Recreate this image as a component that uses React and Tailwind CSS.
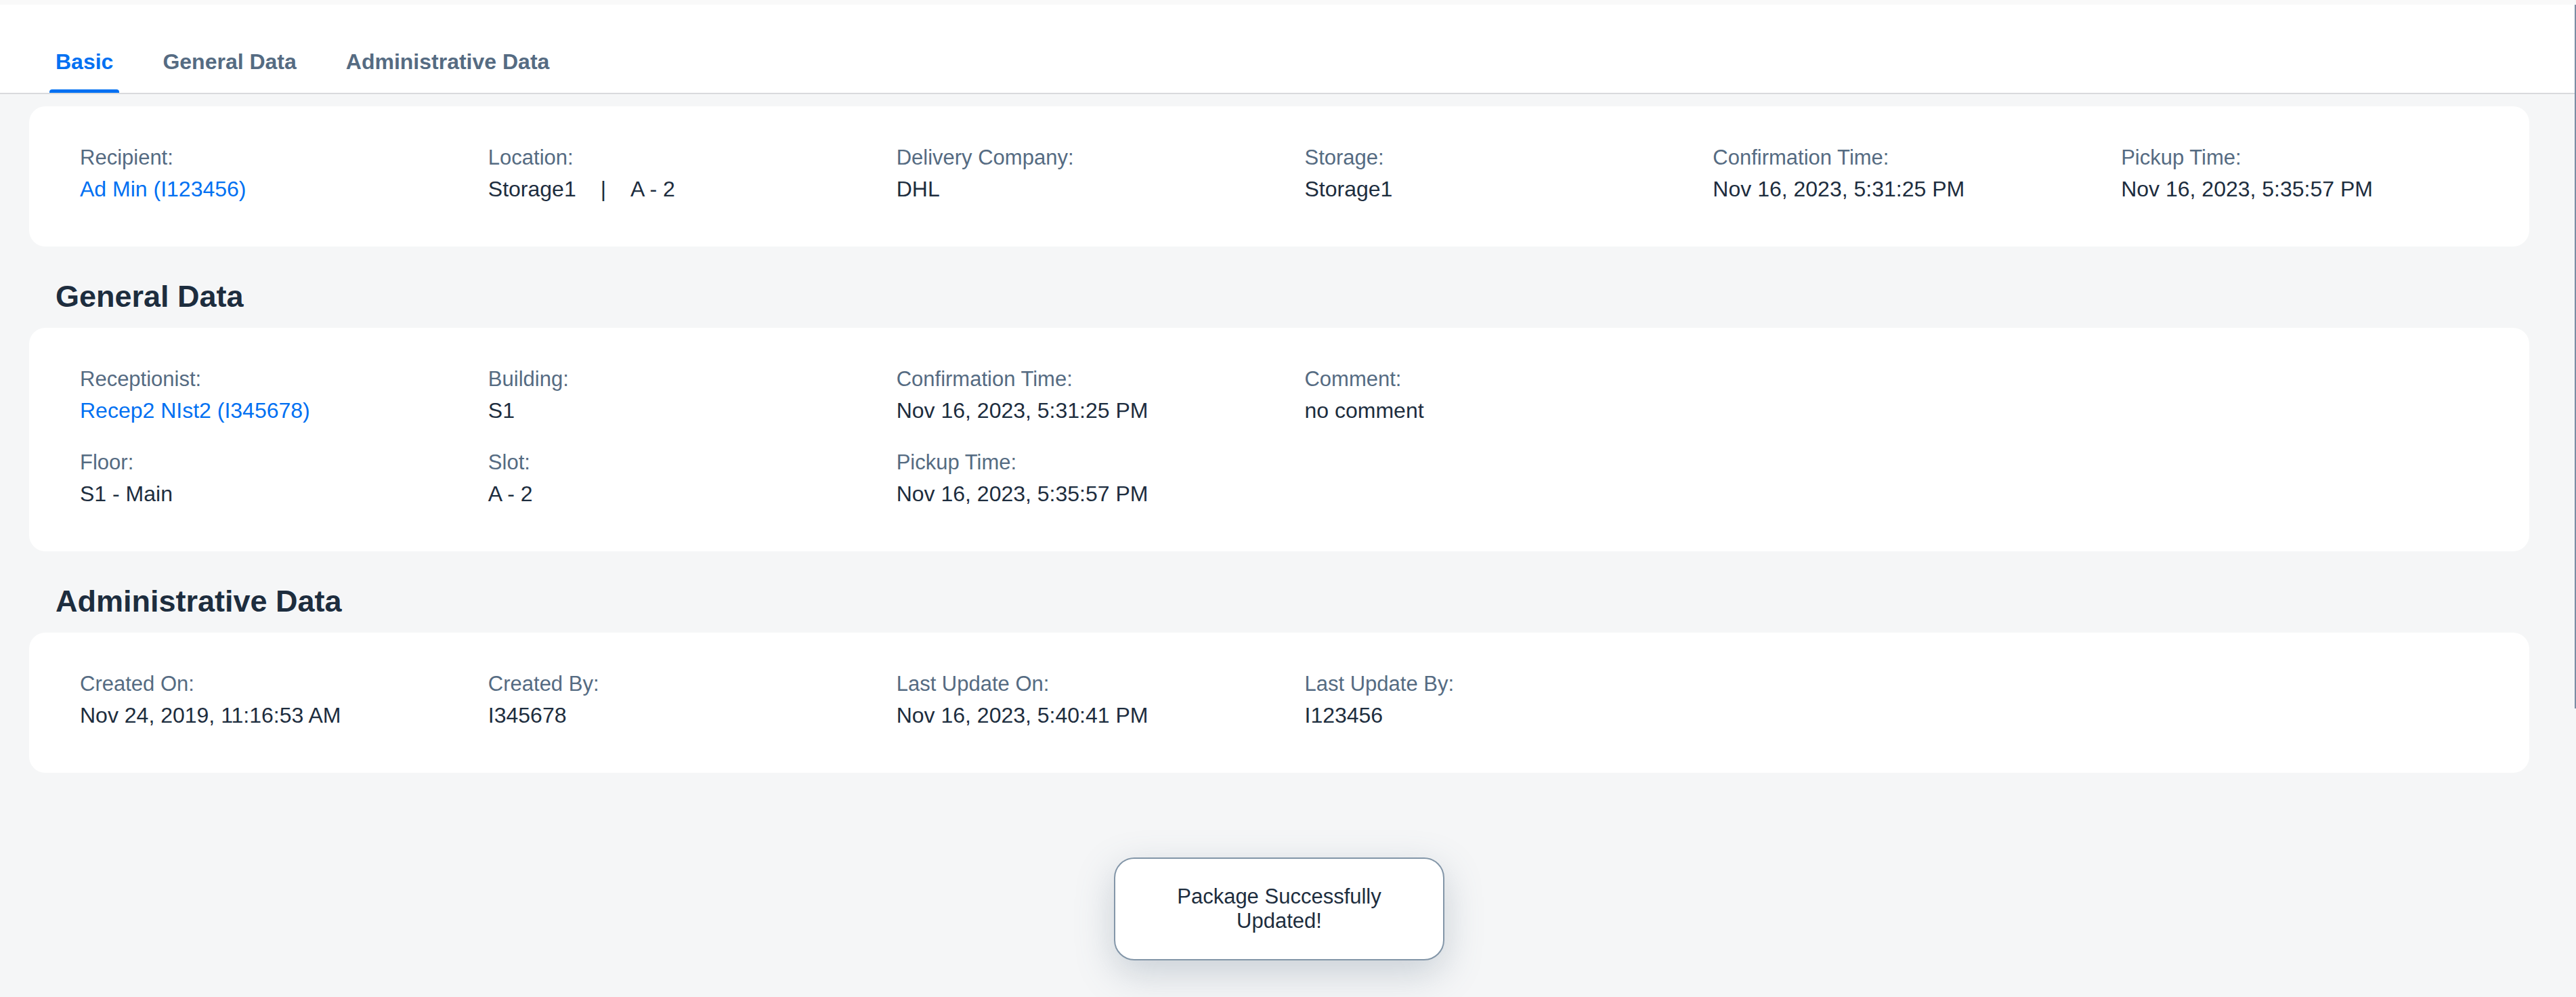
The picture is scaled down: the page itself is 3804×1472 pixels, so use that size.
import React from "react";

const basic = [
    { label: "Recipient:", value: "Ad Min (I123456)", link: true },
    { label: "Location:", value: "location" },
    { label: "Delivery Company:", value: "DHL" },
    { label: "Storage:", value: "Storage1" },
    { label: "Confirmation Time:", value: "Nov 16, 2023, 5:31:25 PM" },
    { label: "Pickup Time:", value: "Nov 16, 2023, 5:35:57 PM" },
];

const general = [
    { label: "Receptionist:", value: "Recep2 NIst2 (I345678)", link: true },
    { label: "Building:", value: "S1" },
    { label: "Confirmation Time:", value: "Nov 16, 2023, 5:31:25 PM" },
    { label: "Comment:", value: "no comment" },
    { label: "Floor:", value: "S1 - Main" },
    { label: "Slot:", value: "A - 2" },
    { label: "Pickup Time:", value: "Nov 16, 2023, 5:35:57 PM" },
];

const admin = [
    { label: "Created On:", value: "Nov 24, 2019, 11:16:53 AM" },
    { label: "Created By:", value: "I345678" },
    { label: "Last Update On:", value: "Nov 16, 2023, 5:40:41 PM" },
    { label: "Last Update By:", value: "I123456" },
];

const tabs = ["Basic", "General Data", "Administrative Data"];

function Field({ label, value, link }) {
    return (
        <div className="flex flex-col">
            <span className="text-[31px] leading-[36px] text-[#556b82] mb-2 whitespace-nowrap">{label}</span>
            {value === "location" ? (
                <span className="text-[32px] leading-[40px] text-[#1d2d3e] whitespace-nowrap">
                    Storage1<span className="mx-[36px]">|</span>A - 2
                </span>
            ) : (
                <span
                    className={`text-[32px] leading-[40px] whitespace-nowrap ${link ? "text-[#0070f2]" : "text-[#1d2d3e]"}`}
                >
                    {value}
                </span>
            )}
        </div>
    );
}

function Section({ fields, rows }) {
    // general data is laid out as two rows of four columns
    if (rows) {
        return (
            <div className="bg-white rounded-[24px] pl-[75px] pt-[58px] pb-[65px]">
                <div className="grid grid-cols-6 gap-y-[39px]">
                    {rows.map((row, r) => (
                        <React.Fragment key={r}>
                            {row.map((f) => (
                                <Field key={f.label} {...f} />
                            ))}
                            {Array.from({ length: 6 - row.length }).map((_, i) => (
                                <div key={"e" + i} />
                            ))}
                        </React.Fragment>
                    ))}
                </div>
            </div>
        );
    }
    return (
        <div className="bg-white rounded-[24px] pl-[75px] pt-[58px] pb-[65px]">
            <div className="grid grid-cols-6">
                {fields.map((f) => (
                    <Field key={f.label} {...f} />
                ))}
            </div>
        </div>
    );
}

function Heading({ children }) {
    return (
        <h2 className="mt-[48px] mb-[20px] ml-[39px] text-[45px] leading-[52px] font-bold text-[#1d2d3e]">
            {children}
        </h2>
    );
}

export default function App() {
    return (
        <div className="relative min-h-[1472px] w-full bg-[#f5f6f7] font-['Liberation_Sans',Arial,sans-serif]">
            <div className="h-[7px] bg-[#f9f9f9] mr-[2px]" />
            <header className="h-[132px] mr-[2px] bg-white border-b-2 border-[#d9dadd] flex items-end pl-[73px] gap-[55px]">
                {tabs.map((t, i) => (
                    <div key={t} className="relative px-[9px] pb-[28px]">
                        <span
                            className={`text-[32px] leading-[36px] font-bold ${i === 0 ? "text-[#0070f2]" : "text-[#556b82]"}`}
                        >
                            {t}
                        </span>
                        {i === 0 && (
                            <div className="absolute left-0 right-0 bottom-0 h-[5px] rounded-t-[4px] bg-[#0070f2]" />
                        )}
                    </div>
                ))}
            </header>

            <main className="relative w-[3778px] px-[43px] pt-[18px]">
                <Section fields={basic} />

                <Heading>General Data</Heading>
                <Section rows={[general.slice(0, 4), general.slice(4)]} />

                <Heading>Administrative Data</Heading>
                <Section fields={admin} />
            </main>

            <div className="absolute top-[1266px] left-[1889px] -translate-x-1/2 w-[488px] h-[152px] bg-white border-2 border-[#8396a8] rounded-[30px] flex items-center justify-center shadow-[0_18px_56px_rgba(85,107,130,0.28)]">
                <p className="text-center text-[31px] leading-[36px] text-[#1d2d3e]">
                    Package Successfully
                    <br />
                    Updated!
                </p>
            </div>

            <div className="absolute right-0 top-[7px] h-[1039px] w-[2px] bg-[#7b8ca3]" />
        </div>
    );
}
